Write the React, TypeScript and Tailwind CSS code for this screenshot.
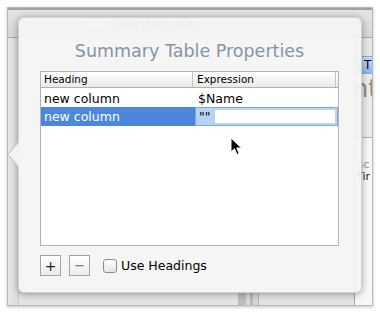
import React from "react";

const font = { fontFamily: '"DejaVu Sans", "Liberation Sans", sans-serif' };

function Cursor() {
  return (
    <svg width="13" height="19" viewBox="0 0 13 19" className="absolute left-[230px] top-[137px]">
      <path d="M1 1 L1 15 L4.5 11.8 L7 17.5 L9.2 16.5 L6.8 11 L11.5 11 Z" fill="#000" stroke="#fff" strokeWidth="1" strokeLinejoin="round" />
    </svg>
  );
}

export default function App() {
  return (
    <div className="relative w-[380px] h-[312px] bg-white overflow-hidden" style={font}>
      {/* framed background screenshot */}
      <div className="pt-[7px] pl-[7px]">
        <div className="w-[366px] h-[299px] border border-[#b9b9b9] shadow-[0_1px_3px_rgba(0,0,0,0.25)] flex flex-col overflow-hidden bg-[#ececec]">
          {/* toolbar */}
          <div className="h-[30px] shrink-0 border-t-2 border-t-[#a2a2a2] border-b border-b-[#a9a9a9] bg-gradient-to-b from-[#e4e4e4] to-[#d6d6d6] flex items-center gap-[6px] pl-[78px]">
            <div className="w-[22px] h-[14px] border border-[#b0b0b0] rounded-[2px] bg-[#ececec] opacity-60" />
            <div className="text-[13px] font-bold text-[#555] opacity-40 blur-[0.6px]">Outline ⌘⌘</div>
          </div>
          <div className="flex-1 flex">
            <div className="w-[11px] bg-gradient-to-r from-[#e6e6e2] to-[#dcdcd8] border-r border-[#c8c8c8]" />
            <div className="flex-1 flex flex-col">
              <div className="flex-1 bg-[#f0f0f0]" />
              <div className="h-[13px] bg-[#e2e2e2] border-t border-[#c4c4c4] flex pl-[219px]">
                <div className="w-[8px] bg-[#bdbdbd]" />
                <div className="w-[4px] bg-[#d8d8d8]" />
                <div className="w-[3px] bg-[#b8b8b8]" />
                <div className="w-[6px] bg-[#d5d5d5] border-r border-[#b0b0b0]" />
              </div>
            </div>
            <div className="w-[18px] flex flex-col border-l border-[#a8a8a8] bg-[#f7f7f7] overflow-hidden">
              <div className="h-[18px] bg-[#e6e6e6]" />
              <div className="h-[18px] bg-gradient-to-b from-[#c6dcf6] to-[#8fb6e8] border-y border-[#8aa9d3] text-[12px] leading-[16px] pl-[9px] text-black">T</div>
              <div className="h-[64px] bg-[#ebebeb] border-b border-[#b5b5b5] text-[24px] leading-[30px] text-[#8a8a8a] whitespace-nowrap -ml-[2px]">nt</div>
              <div className="pt-[21px] text-[11px] leading-[12px] whitespace-nowrap">
                <div className="text-[#999] -ml-[4px]">esc</div>
                <div className="text-[#223] pl-[1px]">Tir</div>
              </div>
            </div>
          </div>
        </div>
      </div>

      {/* popover */}
      <div className="absolute left-[18px] top-[17px] w-[344px] h-[276px] rounded-[6px] bg-[rgba(244,244,244,0.94)] border border-[rgba(0,0,0,0.14)] shadow-[0_1px_7px_rgba(0,0,0,0.35)] flex flex-col pl-[21px] pr-[22px]">
        <svg width="13" height="28" viewBox="0 0 13 28" className="absolute -left-[12px] top-[123px]">
          <polygon points="12.5,0 0.8,13.5 12.5,27" fill="#f3f3f3" stroke="#b9b9b9" strokeWidth="1" />
          <rect x="11.6" y="0" width="2" height="28" fill="#f3f3f3" />
        </svg>
        <div className="pt-[23px] h-[43px] text-[17.5px] leading-[20px] text-[#8595a7] text-center whitespace-nowrap">
          Summary Table Properties
        </div>
        <div className="mt-[10px] w-[299px] h-[175px] border border-[#b3b3b3] bg-white flex flex-col">
          <div className="h-[16px] border-b border-[#b1b1b1] bg-gradient-to-b from-[#ffffff] to-[#e9e9e9] flex text-[10.5px] leading-[14px] text-black">
            <div className="w-[152px] border-r border-[#c4c4c4] pl-[3px]">Heading</div>
            <div className="flex-1 border-r border-[#c4c4c4] pl-[4px]">Expression</div>
            <div className="w-[2px]" />
          </div>
          <div className="h-[19px] flex text-[12.5px] leading-[19px] pt-[1px] text-black">
            <div className="w-[153px] pl-[3px] whitespace-nowrap">new column</div>
            <div className="flex-1 pl-[4px]">$Name</div>
          </div>
          <div className="h-[19px] flex text-[12.5px] leading-[18px]">
            <div className="w-[154px] pl-[3px] bg-[#4b88dc] text-white whitespace-nowrap pt-[1px]">new column</div>
            <div className="flex-1 border border-[#7ea9e2] shadow-[inset_0_0_0_2px_#b9d3f3] bg-white flex items-center pl-[1px]">
              <span className="bg-[#b6d3f6] text-black leading-[15px] pl-[2px] pr-[4px]">""</span>
            </div>
          </div>
        </div>
        <div className="mt-[9px] flex items-center h-[21px]">
          <div className="w-[21px] h-[21px] border border-[#a3a3a3] bg-gradient-to-b from-[#ffffff] to-[#ececec] flex items-center justify-center text-[14px] leading-none text-[#222]">+</div>
          <div className="ml-[8px] w-[21px] h-[21px] border border-[#a3a3a3] bg-gradient-to-b from-[#ffffff] to-[#ececec] flex items-center justify-center text-[13px] leading-none text-[#666]">−</div>
          <div className="ml-[13px] w-[14px] h-[14px] rounded-[3px] border border-[#8e8e8e] bg-gradient-to-b from-[#ffffff] to-[#e4e4e4]" />
          <div className="ml-[4px] text-[12.5px] leading-[16px] text-black whitespace-nowrap">Use Headings</div>
        </div>
      </div>

      <Cursor />
    </div>
  );
}
